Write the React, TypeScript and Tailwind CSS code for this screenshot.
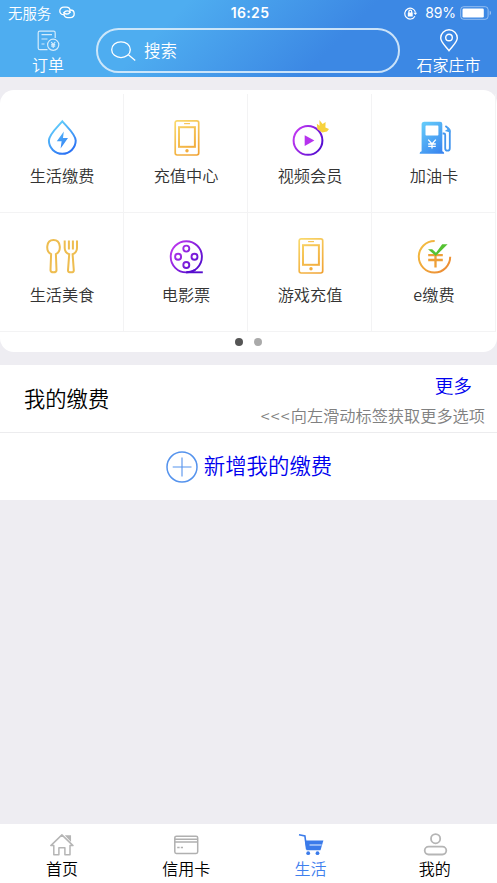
import type { ReactNode } from "react"
import clsx from "clsx"

interface IconProps {
  className?: string;
}

function LinkIcon() {
  return (
    <svg className="h-[13px] w-4" viewBox="0 0 16 13" fill="none" stroke="currentColor" strokeWidth={1.3} strokeLinecap="round">
      <path d="M4.6 8.7 C2.3 8.7 .8 7.1 .8 5 C.8 2.7 2.5 1.2 4.8 1.2 H7.2 C9.6 1.2 11 2.8 11 4.7 C11 6.7 9.5 8 7.6 8 C6.2 8 5.2 7.5 4.8 6.5" />
      <path d="M11.4 4 C13.8 4 15.2 5.6 15.2 7.8 C15.2 10.2 13.6 11.6 11.2 11.6 H8.8 C6.4 11.6 5 10.1 5 8.2 C5 6.2 6.5 4.9 8.4 4.9 C9.8 4.9 10.8 5.3 11.2 6.3" />
    </svg>
  )
}

function RotationLockIcon() {
  return (
    <svg className="h-[13px] w-[13px]" viewBox="0 0 13 13" fill="none" stroke="currentColor" strokeWidth={1.2}>
      <path d="M10.9 9.3 A5.4 5.4 0 1 1 11.5 5.6" />
      <path d="M9.4 5.7 H13.2 L11.4 8 Z" fill="currentColor" stroke="none" />
      <rect x="3.8" y="5.6" width="4.9" height="4" rx=".4" fill="currentColor" stroke="none" />
      <path d="M4.9 6 V4.6 A1.4 1.5 0 0 1 7.7 4.6 V6" />
    </svg>
  )
}

function BatteryIcon() {
  return (
    <svg className="h-[14px] w-8" viewBox="0 0 32 14" fill="none">
      <rect x=".7" y=".7" width="27.4" height="12.6" rx="3" stroke="#fff" strokeOpacity={0.45} />
      <rect x="2.5" y="2.5" width="21.3" height="9" rx="1.2" fill="#fff" />
      <path d="M29.7 4.8 C31.4 5.3 31.4 8.7 29.7 9.2 Z" fill="#fff" fillOpacity={0.5} />
    </svg>
  )
}

function OrderIcon() {
  return (
    <svg className="h-[22px] w-[23px]" viewBox="0 0 23 22" fill="none" stroke="#d5ecfc" strokeWidth={1.2}>
      <path d="M10.5 19.6 H2.8 Q1.2 19.6 1.2 18 V2.8 Q1.2 1.2 2.8 1.2 H16.6 Q18.2 1.2 18.2 2.8 V8" />
      <path d="M4.5 4.6 H15 M4.5 9 H10.5 M4.5 14 H7.5" />
      <circle cx="16.2" cy="14.8" r="5.6" />
      <path d="M14.2 12 L16.2 14.6 L18.2 12 M16.2 14.6 V18 M14.2 14.6 H18.2 M14.2 16.2 H18.2" />
    </svg>
  )
}

function PinIcon() {
  return (
    <svg className="h-[23px] w-5" viewBox="0 0 20 23" fill="none" stroke="currentColor" strokeWidth={1.4}>
      <path d="M10 21.7 C7 17.5 1.7 13.2 1.7 9 A8.3 8.2 0 0 1 18.3 9 C18.3 13.2 13 17.5 10 21.7 Z" />
      <circle cx="10" cy="8.5" r="3.3" />
    </svg>
  )
}

function SearchIcon() {
  return (
    <svg className="h-5 w-[25px]" viewBox="0 0 25 20" fill="none" stroke="currentColor" strokeWidth={1.3}>
      <ellipse cx="10" cy="8.7" rx="9.3" ry="7.9" />
      <path d="M17.4 13.8 L24.2 19.4" />
    </svg>
  )
}

function DropIcon() {
  return (
    <svg className="size-10" viewBox="0 0 40 40" fill="none">
      <defs>
        <linearGradient id="drop" x1="8" y1="4" x2="30" y2="36" gradientUnits="userSpaceOnUse">
          <stop offset=".1" stopColor="#63d0fb" />
          <stop offset=".9" stopColor="#2c74f4" />
        </linearGradient>
      </defs>
      <path d="M20.3 3.3 C15.8 8.6 6.9 16.4 6.9 22.6 A13.4 13.2 0 0 0 33.7 22.6 C33.7 16.4 24.8 8.6 20.3 3.3 Z" stroke="url(#drop)" strokeWidth={2} />
      <path d="M21.8 13.5 L14.8 23.2 H19.6 L18.6 30.5 L26 20 H21 Z" fill="url(#drop)" />
    </svg>
  )
}

function PhoneIcon({ className }: IconProps) {
  return (
    <svg className={clsx("size-10", className)} viewBox="0 0 40 40" fill="none">
      <defs>
        <linearGradient id="phone" x1="8" y1="4" x2="32" y2="38" gradientUnits="userSpaceOnUse">
          <stop stopColor="#f9d96c" />
          <stop offset="1" stopColor="#f0a131" />
        </linearGradient>
      </defs>
      <g stroke="url(#phone)">
        <rect x="9.2" y="2.8" width="23.5" height="34.2" rx="1.9" strokeWidth={1.7} />
        <rect x="13" y="9.2" width="15.9" height="19.6" strokeWidth={2} />
        <path d="M18.1 5.6 H24" strokeWidth={1.2} stroke="#f6c65a" />
      </g>
      <circle cx="21" cy="32.8" r="1.7" fill="#f2ad3e" />
    </svg>
  )
}

function VideoIcon() {
  return (
    <svg className="size-10" viewBox="0 0 40 40" fill="none">
      <defs>
        <linearGradient id="video" x1="4" y1="14" x2="33" y2="28" gradientUnits="userSpaceOnUse">
          <stop stopColor="#c238f2" />
          <stop offset="1" stopColor="#510bcf" />
        </linearGradient>
      </defs>
      <circle cx="18" cy="22.4" r="14.4" stroke="url(#video)" strokeWidth={2} />
      <path d="M14.7 17.2 L24.4 22.6 L14.7 28 Z" fill="#b632ee" />
      <path d="M26.8 5.8 L29.6 7.8 L29.4 2 L32.6 6.1 L35.6 3.9 L35.4 9.6 L39 10.9 L37 13.6 L32.4 14.4 L27.4 11.2 Z" fill="#f7d23c" />
    </svg>
  )
}

function FuelIcon() {
  return (
    <svg className="size-10" viewBox="0 0 40 40" fill="none">
      <defs>
        <linearGradient id="fuel" x1="6" y1="5" x2="32" y2="35" gradientUnits="userSpaceOnUse">
          <stop stopColor="#65cdfa" />
          <stop offset="1" stopColor="#347dee" />
        </linearGradient>
      </defs>
      <g transform="translate(.8 .2)">
        <path fillRule="evenodd" fill="url(#fuel)" d="M9.5 3.6 H25.2 Q27.5 3.6 27.5 5.9 V33.1 Q29.4 33.4 29.4 35.6 H4.8 Q4.8 33.4 6.8 33.1 V6.1 Q6.8 3.6 9.5 3.6 Z M11.3 7.4 Q10.7 7.4 10.7 8.2 V16.6 Q10.7 17.4 11.5 17.4 H22.9 Q23.6 17.4 23.6 16.6 V8.2 Q23.6 7.4 22.9 7.4 Z" />
        <path d="M13.4 21.4 L17.2 25.8 L21 21.4 M17.2 25.6 V30.4 M13.4 25.8 H21 M13.4 28.1 H21" stroke="#fff" strokeWidth={1.3} />
        <path d="M27.8 15.3 H29.2 Q30.4 15.3 30.4 16.8 V30 A2.3 2.5 0 0 0 35 30 V12.9 Q34.6 10.6 30.6 7.9" stroke="#4295ee" strokeWidth={1.8} />
        <path d="M31 7.6 L35.6 11.4 V14.4 L30 12.9 L32.6 11 Z" fill="#4ba2f1" />
      </g>
    </svg>
  )
}

function CutleryIcon() {
  return (
    <svg className="size-10" viewBox="0 0 40 40" fill="none" stroke="#eebd50" strokeWidth={2}>
      <path d="M9.1 17.2 C3.5 14.5 3.8 3 11.5 3 C19.2 3 19.6 14.5 13.9 17.2 L14.5 33.2 Q14.5 35.3 11.5 35.3 Q8.5 35.3 8.5 33.2 Z" />
      <path d="M22.7 3.5 V11 Q22.7 15.5 27.2 17.2 L26 33.4 Q26 35.3 28.9 35.3 Q31.8 35.3 31.8 33.4 L30.6 17.2 Q35 15.5 35 11 V3.5" />
      <path d="M26.9 3.5 V12.5 M30.9 3.5 V12.5" />
    </svg>
  )
}

function FilmIcon() {
  return (
    <svg className="size-10" viewBox="0 0 40 40" fill="none">
      <defs>
        <linearGradient id="film" x1="6" y1="8" x2="34" y2="32" gradientUnits="userSpaceOnUse">
          <stop stopColor="#bf38ef" />
          <stop offset="1" stopColor="#500bcc" />
        </linearGradient>
      </defs>
      <g stroke="url(#film)" strokeWidth={1.9}>
        <circle cx="20.3" cy="19.8" r="15.6" />
        <circle cx="20.3" cy="11.6" r="3" />
        <circle cx="12.1" cy="19.8" r="3" />
        <circle cx="28.5" cy="19.8" r="3" />
        <circle cx="20.3" cy="28" r="3" />
        <path d="M20.3 35.4 Q26.3 34.8 29.3 32.8" />
      </g>
      <path d="M20.3 35.3 H36.8" stroke="#560dcd" strokeWidth={1.9} />
    </svg>
  )
}

function YuanIcon() {
  return (
    <svg className="size-10" viewBox="0 0 40 40" fill="none">
      <defs>
        <linearGradient id="yuan" x1="6" y1="8" x2="34" y2="32" gradientUnits="userSpaceOnUse">
          <stop stopColor="#f3bd41" />
          <stop offset="1" stopColor="#ec8c34" />
        </linearGradient>
      </defs>
      <path d="M20.7 4.1 A15.7 15.7 0 1 0 36.2 19.8" stroke="url(#yuan)" strokeWidth={2} />
      <path d="M14.2 18.2 H28.8 M14.2 23 H28.8 M21.5 18 V30.5" stroke="#ee9f36" strokeWidth={2.3} />
      <path d="M14 12.3 H18.2 L22 15.8 L28.2 7.3 H33.6 L21.8 19 Z" fill="#55c232" />
    </svg>
  )
}

function HomeIcon() {
  return (
    <svg className="h-6 w-[26px]" viewBox="0 0 26 24" fill="none" stroke="#b5b5b5" strokeWidth={1.5}>
      <path d="M1.8 12.6 L12.9 1.9 L24 12.6 H21 V21.8 H15.9 V14.8 H9.9 V21.8 H4.8 V12.6 Z" strokeLinejoin="round" />
      <path d="M17.5 3 H21.3 V7 Z" fill="#b5b5b5" />
    </svg>
  )
}

function CardIcon() {
  return (
    <svg className="h-6 w-[26px]" viewBox="0 0 26 24" fill="none" stroke="#b0b0b0" strokeWidth={1.5}>
      <rect x="1.8" y="3.2" width="22.9" height="17.2" rx="1.6" />
      <path d="M1.8 6.2 H24.6 M1.8 9 H24.6" />
      <path d="M4.2 14.6 H6.6 M7.8 14.6 H10" />
    </svg>
  )
}

function CartIcon() {
  return (
    <svg className="h-6 w-[26px]" viewBox="0 0 26 24" fill="none">
      <path d="M1 1.8 L6.9 3 L8.7 16.5" stroke="#3b7bea" strokeWidth={1.6} />
      <path d="M6.9 7.4 H25.4 L22.5 17.3 H8.6 Z" fill="#3b7bea" />
      <path d="M11.5 12 H23.6" stroke="#a9c7f8" strokeWidth={1.6} />
      <circle cx="10.2" cy="20.2" r="1.9" fill="#3b7bea" />
      <circle cx="19.5" cy="20.2" r="1.9" fill="#3b7bea" />
    </svg>
  )
}

function UserIcon() {
  return (
    <svg className="h-6 w-[26px]" viewBox="0 0 26 24" fill="none" stroke="#b5b5b5" strokeWidth={1.8}>
      <circle cx="13.6" cy="5.7" r="4.6" />
      <rect x="2.7" y="13.7" width="21.6" height="7.8" rx="3.9" />
    </svg>
  )
}

const services: { label: string; icon: ReactNode }[] = [
  { label: "生活缴费", icon: <DropIcon /> },
  { label: "充值中心", icon: <PhoneIcon /> },
  { label: "视频会员", icon: <VideoIcon /> },
  { label: "加油卡", icon: <FuelIcon /> },
  { label: "生活美食", icon: <CutleryIcon /> },
  { label: "电影票", icon: <FilmIcon /> },
  { label: "游戏充值", icon: <PhoneIcon className="-mt-px mb-px" /> },
  { label: "e缴费", icon: <YuanIcon /> },
]

const tabs: { label: string; icon: ReactNode; active?: boolean }[] = [
  { label: "首页", icon: <HomeIcon /> },
  { label: "信用卡", icon: <CardIcon /> },
  { label: "生活", icon: <CartIcon />, active: true },
  { label: "我的", icon: <UserIcon /> },
]

function StatusBar() {
  return (
    <div className="grid h-[26px] grid-cols-[1fr_auto_1fr] items-center pl-2 pr-[5px]">
      <div className="flex items-center gap-2 text-[14.4px]">
        <span className="pb-px">无服务</span>
        <LinkIcon />
      </div>
      <span className="pb-px font-['Inter'] text-[14px] font-semibold tracking-[0.35px]">16:25</span>
      <div className="flex items-center justify-end">
        <RotationLockIcon />
        <span className="ml-2 mr-[4px] pb-px font-['Inter'] text-[14px] font-normal tracking-[-0.1px]">89%</span>
        <BatteryIcon />
      </div>
    </div>
  )
}

function Header() {
  return (
    <header className="h-[77px] bg-[linear-gradient(135deg,#4eadf0_33%,#3c88e4_66%)] text-white">
      <StatusBar />
      <div className="flex h-[51px]">
        <div className="flex w-24 flex-col items-center pt-[4px]">
          <OrderIcon />
          <span className="text-base leading-6">订单</span>
        </div>
        <div className="mt-[2px] flex h-[45px] w-[304px] items-center rounded-full border-2 border-[#d9ecfb]/90 pl-[13px]">
          <SearchIcon />
          <span className="ml-2 text-[16.5px]">搜索</span>
        </div>
        <div className="flex flex-1 flex-col items-center pt-[3px]">
          <PinIcon />
          <span className="text-base leading-6">石家庄市</span>
        </div>
      </div>
    </header>
  )
}

function ServiceCard() {
  return (
    <section className="mt-[13px] h-[262px] rounded-[14px] bg-white pt-1">
      <div className="grid w-[496px] grid-cols-4 grid-rows-[119px_119px]">
        {services.map(({ label, icon }) => (
          <div key={label} className="flex flex-col items-center border-b border-r border-[#f3f3f4] pt-6">
            {icon}
            <span className="mt-[5px] pl-px text-[16.2px] leading-6 text-[#333]">{label}</span>
          </div>
        ))}
      </div>
      <div className="flex justify-center gap-[11px] pt-[6px]">
        <span className="size-2 rounded-full bg-[#555]" />
        <span className="size-2 rounded-full bg-[#aaa]" />
      </div>
    </section>
  )
}

function MyBills() {
  return (
    <section className="mt-[13px] h-[135px] bg-white">
      <div className="flex h-[68px] items-center justify-between border-b border-[#ececee] pl-6 pr-3">
        <h2 className="pb-[2px] text-[21.3px] text-black">我的缴费</h2>
        <div className="flex flex-col items-end pt-[2px]">
          <a className="mr-[13px] text-[18.7px] leading-[30px] text-[#0000ee]">更多</a>
          <span className="text-[16.2px] leading-[30px] text-[#808080]">
            <span className="tracking-[1.1px]">&lt;&lt;&lt;</span>向左滑动标签获取更多选项
          </span>
        </div>
      </div>
      <div className="flex h-[67px] items-center justify-center gap-[6px] pl-px">
        <svg className="size-8" viewBox="0 0 32 32" fill="none" stroke="#5593ed">
          <circle cx="16" cy="16" r="15" strokeWidth={1.5} />
          <path d="M6.7 16 H25.5 M16 6.6 V25.4" strokeWidth={1.1} />
        </svg>
        <a className="pb-[2px] text-[21.4px] text-[#0000ee]">新增我的缴费</a>
      </div>
    </section>
  )
}

function TabBar() {
  return (
    <nav className="grid h-[59px] w-[497px] grid-cols-4">
      {tabs.map(({ label, icon, active }) => (
        <div key={label} className="flex flex-col items-center pt-[9px]">
          {icon}
          <span className={clsx("-mt-px text-base leading-6", active ? "text-[#3f80ee]" : "text-black")}>{label}</span>
        </div>
      ))}
    </nav>
  )
}

export default function App() {
  return (
    <main className="flex h-[883px] w-[497px] flex-col overflow-hidden bg-[#eeedf2] font-['Noto_Sans_CJK_SC',sans-serif] font-[350]">
      <Header />
      <ServiceCard />
      <MyBills />
      <div className="mt-auto bg-white">
        <TabBar />
      </div>
    </main>
  )
}
